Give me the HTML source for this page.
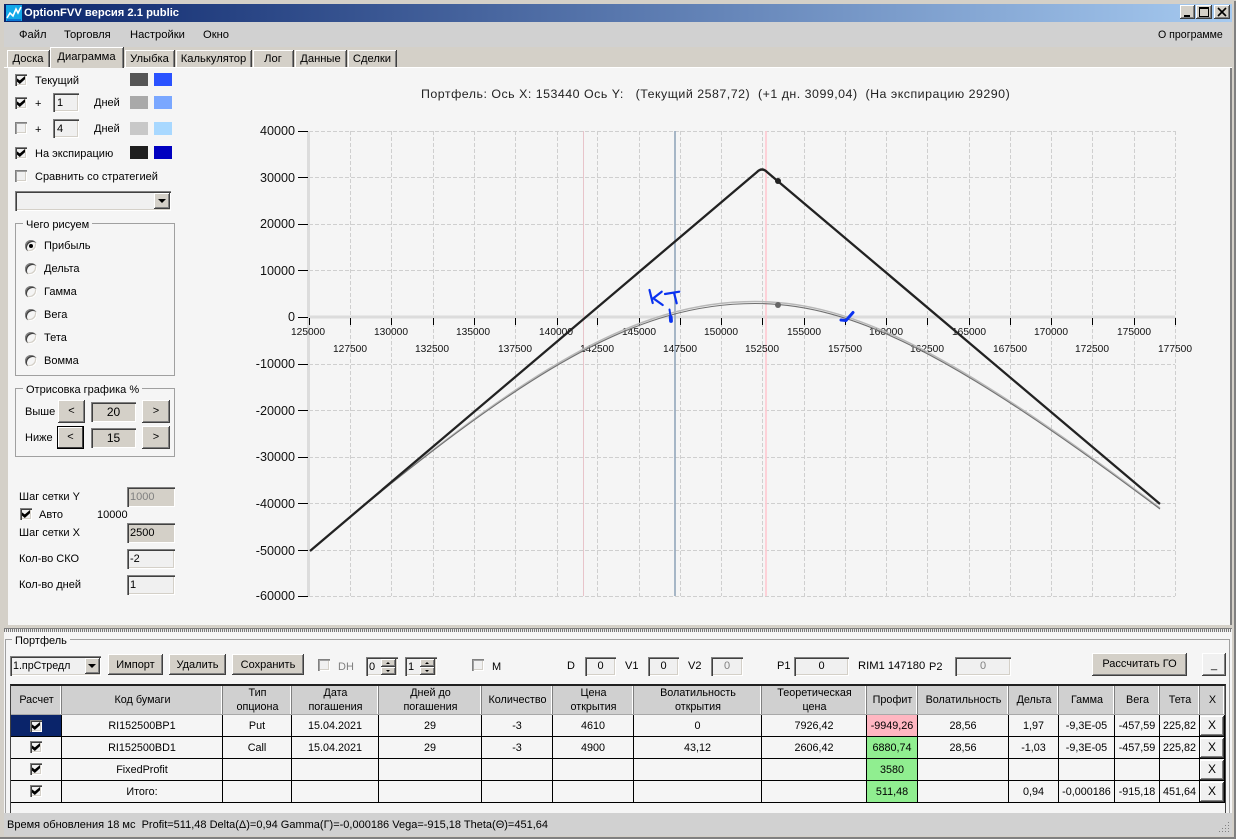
<!DOCTYPE html>
<html><head><meta charset="utf-8"><title>OptionFVV</title>
<style>
html,body{margin:0;padding:0;width:1236px;height:839px;overflow:hidden;background:#d4d0c8}
body{position:relative;font:11px "Liberation Sans","Noto Sans CJK SC",sans-serif;color:#000}
div,span{box-sizing:border-box}
.a{position:absolute}
.t{position:absolute;white-space:pre;line-height:14px;height:14px}
.b{position:absolute;background:#d4d0c8;box-shadow:inset -1px -1px #404040,inset 1px 1px #fff,inset -2px -2px #808080;text-align:center;white-space:pre}
.i{position:absolute;background:#f0f0f0;box-shadow:inset 1px 1px #808080,inset 2px 2px #404040,inset -1px -1px #fff,inset -2px -2px #d4d0c8;padding-left:4px;white-space:pre;font-size:11px}
.g{background:#d4d0c8}
.c{text-align:center;padding-left:0}
.cb{position:absolute;width:12px;height:12px;background:#f0f0f0;box-shadow:inset 1px 1px #808080,inset 2px 2px #404040,inset -1px -1px #fff,inset -2px -2px #d4d0c8}
.cb.on::after{content:"";position:absolute;left:2px;top:2px;width:8px;height:8px;background:#000;clip-path:polygon(0 30%,0 70%,35% 100%,100% 40%,100% 0,35% 55%)}
.cb.d{box-shadow:inset 1px 1px #808080,inset 2px 2px #a0a0a0,inset -1px -1px #fff,inset -2px -2px #d4d0c8}
.r{position:absolute;left:25px;width:12px;height:12px;border-radius:50%;background:#f5f5f5;box-shadow:inset 1px 1px 0 #808080,inset 2px 2px 0 #404040,inset -1px -1px 0 #fff,inset -2px -2px 0 #d4d0c8}
.r.on::after{content:"";position:absolute;left:4px;top:4px;width:4px;height:4px;border-radius:50%;background:#000}
.s{position:absolute;height:13px}
.gb{position:absolute;border:1px solid #a0a0a0}
.gl{position:absolute;background:#f5f5f5;padding:0 3px;white-space:pre;line-height:14px;font-size:11px}
.tab{position:absolute;top:50px;height:18px;background:#d4d0c8;box-shadow:inset 1px 1px #fff,inset -1px 0 #808080,1px 0 #404040;text-align:center;line-height:18px;font-size:11.2px}
.dn{position:absolute;width:0;height:0;border-left:4px solid transparent;border-right:4px solid transparent;border-top:4px solid #000}
.up2{position:absolute;width:0;height:0;border-left:2px solid transparent;border-right:2px solid transparent;border-bottom:2px solid #000}
.dn2{position:absolute;width:0;height:0;border-left:2px solid transparent;border-right:2px solid transparent;border-top:2px solid #000}
table{position:absolute;left:11px;top:686px;border-collapse:separate;border-spacing:0;table-layout:fixed;width:1214px;font-size:10.8px}
th{font-weight:normal;background:#d0d0d0;height:28px;padding:0;line-height:14px;box-shadow:inset -1px 0 #808080,inset -2px 0 #fff;border-bottom:1px solid #a8a8a8;text-align:center}
td{height:22px;padding:0;text-align:center;border-right:1px solid #000;border-bottom:1px solid #000;box-sizing:border-box;background:#f5f5f5}
.x{position:absolute;left:1200px;width:24px;height:20px;line-height:19px;font-size:12px;background:#f0f0f0}
</style></head>
<body>
<!-- title bar -->
<div class="a" style="left:4px;top:4px;width:1228px;height:18px;background:linear-gradient(90deg,#0a246a,#a6caf0)"></div>
<svg class="a" style="left:6px;top:5px" width="16" height="16"><rect width="16" height="16" fill="#12a8e8"/><path d="M1 13L4 8l3 3 3-7 2 4 3-6" stroke="#fff" stroke-width="1.6" fill="none"/><path d="M1 15h14" stroke="#0040c0"/></svg>
<div class="t" style="left:24px;top:6px;color:#fff;font-weight:bold;font-size:11.2px">OptionFVV версия 2.1 public</div>
<div class="b" style="left:1180px;top:5px;width:15px;height:14px"></div><div class="a" style="left:1184px;top:15px;width:6px;height:2px;background:#000"></div>
<div class="b" style="left:1196px;top:5px;width:16px;height:14px"></div><div class="a" style="left:1199px;top:7px;width:10px;height:10px;border:1px solid #000;border-top-width:2px"></div>
<div class="b" style="left:1214px;top:5px;width:16px;height:14px"></div>
<svg class="a" style="left:1214px;top:5px" width="16" height="14"><path d="M4 3l8 8M12 3l-8 8" stroke="#000" stroke-width="1.6"/></svg>
<!-- menu -->
<div class="a" style="left:4px;top:22px;width:1228px;height:25px;background:#d1d1d1"></div>
<div class="t" style="left:19px;top:28px;font-size:11.2px">Файл</div>
<div class="t" style="left:64px;top:28px;font-size:11.2px">Торговля</div>
<div class="t" style="left:130px;top:28px;font-size:11.2px">Настройки</div>
<div class="t" style="left:203px;top:28px;font-size:11.2px">Окно</div>
<div class="t" style="left:1158px;top:28px;font-size:10.6px">О программе</div>
<!-- tabs -->
<div class="tab" style="left:7px;width:42px">Доска</div>
<div class="tab" style="left:50px;width:73px;top:47px;height:21px;z-index:2;line-height:20px">Диаграмма</div>
<div class="tab" style="left:125px;width:49px">Улыбка</div>
<div class="tab" style="left:176px;width:75px">Калькулятор</div>
<div class="tab" style="left:253px;width:40px">Лог</div>
<div class="tab" style="left:295px;width:51px">Данные</div>
<div class="tab" style="left:348px;width:48px">Сделки</div>
<!-- chart panel -->
<div class="a" style="left:4px;top:67px;width:1228px;height:1px;background:#fff"></div>
<div class="a" style="left:8px;top:68px;width:1222px;height:557px;background:#f5f5f5"></div>
<div class="a" style="left:1230px;top:68px;width:2px;height:560px;background:#808080"></div>
<div class="a" style="left:4px;top:625px;width:1228px;height:4px;background:#d4d0c8;border-bottom:1px solid #808080"></div>
<div class="a" style="left:4px;top:629px;width:1228px;height:3px;background:repeating-linear-gradient(90deg,#777 0 1px,#eee 1px 2px)"></div>

<!-- left controls -->
<div class="cb on" style="left:15px;top:74px"></div><div class="t" style="left:35px;top:74px">Текущий</div>
<div class="s" style="left:130px;top:73px;width:18px;background:#555"></div><div class="s" style="left:154px;top:73px;width:18px;background:#2a52ff"></div>
<div class="cb on" style="left:15px;top:97px"></div><div class="t" style="left:35px;top:97px">+</div>
<div class="i" style="left:53px;top:93px;width:26px;height:19px;line-height:20px">1</div><div class="t" style="left:94px;top:96px">Дней</div>
<div class="s" style="left:130px;top:96px;width:18px;background:#a9a9a9"></div><div class="s" style="left:154px;top:96px;width:18px;background:#7aa7ff"></div>
<div class="cb d" style="left:15px;top:122px"></div><div class="t" style="left:35px;top:123px">+</div>
<div class="i" style="left:53px;top:119px;width:26px;height:19px;line-height:20px">4</div><div class="t" style="left:94px;top:122px">Дней</div>
<div class="s" style="left:130px;top:122px;width:18px;background:#c8c8c8"></div><div class="s" style="left:154px;top:122px;width:18px;background:#a8d8ff"></div>
<div class="cb on" style="left:15px;top:147px"></div><div class="t" style="left:35px;top:147px">На экспирацию</div>
<div class="s" style="left:130px;top:146px;width:18px;background:#1e1e1e"></div><div class="s" style="left:154px;top:146px;width:18px;background:#0000c0"></div>
<div class="cb d" style="left:15px;top:170px"></div><div class="t" style="left:35px;top:170px">Сравнить со стратегией</div>
<div class="i" style="left:15px;top:191px;width:156px;height:20px"></div>
<div class="b" style="left:154px;top:193px;width:16px;height:16px"></div><div class="dn" style="left:158px;top:199px"></div>

<div class="gb" style="left:15px;top:223px;width:160px;height:153px"></div>
<div class="gl" style="left:23px;top:218px">Чего рисуем</div>
<div class="r on" style="top:240px"></div><div class="t" style="left:44px;top:239px">Прибыль</div>
<div class="r" style="top:263px"></div><div class="t" style="left:44px;top:262px">Дельта</div>
<div class="r" style="top:286px"></div><div class="t" style="left:44px;top:285px">Гамма</div>
<div class="r" style="top:309px"></div><div class="t" style="left:44px;top:308px">Вега</div>
<div class="r" style="top:332px"></div><div class="t" style="left:44px;top:331px">Тета</div>
<div class="r" style="top:355px"></div><div class="t" style="left:44px;top:354px">Вомма</div>

<div class="gb" style="left:15px;top:388px;width:160px;height:69px"></div>
<div class="gl" style="left:23px;top:383px">Отрисовка графика %</div>
<div class="t" style="left:25px;top:405px">Выше</div>
<div class="b" style="left:58px;top:400px;width:27px;height:23px;line-height:22px">&lt;</div>
<div class="i g c" style="left:91px;top:402px;width:45px;height:20px;line-height:20px;font-size:12px">20</div>
<div class="b" style="left:142px;top:400px;width:28px;height:23px;line-height:22px">&gt;</div>
<div class="t" style="left:25px;top:431px">Ниже</div>
<div class="b" style="left:57px;top:426px;width:27px;height:23px;line-height:22px;box-shadow:inset 0 0 0 1px #000,inset -2px -2px #404040,inset 2px 2px #fff">&lt;</div>
<div class="i g c" style="left:91px;top:428px;width:45px;height:20px;line-height:20px;font-size:12px">15</div>
<div class="b" style="left:142px;top:426px;width:28px;height:23px;line-height:22px">&gt;</div>

<div class="t" style="left:19px;top:490px">Шаг сетки Y</div>
<div class="i g" style="left:127px;top:487px;width:48px;height:20px;line-height:21px;color:#808080;padding-left:3px">1000</div>
<div class="cb on" style="left:20px;top:508px"></div><div class="t" style="left:39px;top:508px">Авто</div>
<div class="t" style="left:97px;top:508px">10000</div>
<div class="t" style="left:19px;top:526px">Шаг сетки X</div>
<div class="i g" style="left:127px;top:523px;width:48px;height:20px;line-height:21px;padding-left:3px">2500</div>
<div class="t" style="left:19px;top:552px">Кол-во СКО</div>
<div class="i" style="left:127px;top:549px;width:48px;height:20px;line-height:21px;padding-left:3px">-2</div>
<div class="t" style="left:19px;top:578px">Кол-во дней</div>
<div class="i" style="left:127px;top:575px;width:48px;height:20px;line-height:21px;padding-left:3px">1</div>

<!-- chart -->
<div class="t" style="left:421px;top:87px;font-size:12.4px;letter-spacing:.5px;color:#222">Портфель: Ось X: 153440 Ось Y:   (Текущий 2587,72)  (+1 дн. 3099,04)  (На экспирацию 29290)</div>
<svg class="a" style="left:0;top:0" width="1236" height="630" font-family="Liberation Sans" fill="none">
<path d="M350.5 131V596M391.5 131V596M433.5 131V596M474.5 131V596M515.5 131V596M557.5 131V596M597.5 131V596M639.5 131V596M680.5 131V596M721.5 131V596M762.5 131V596M804.5 131V596M845.5 131V596M886.5 131V596M927.5 131V596M969.5 131V596M1010.5 131V596M1051.5 131V596M1092.5 131V596M1134.5 131V596M1175.5 131V596M309 131.5H1175M309 177.5H1175M309 224.5H1175M309 270.5H1175M309 364.5H1175M309 410.5H1175M309 457.5H1175M309 503.5H1175M309 550.5H1175M309 596.5H1175" stroke="#cfcfcf" stroke-dasharray="4 2"/>
<path d="M308.5 131V597" stroke="#dcdcdc" stroke-width="3"/>
<path d="M309 317H1175" stroke="#dcdcdc" stroke-width="3"/>
<path d="M583.5 131V596" stroke="#e8c4ca"/>
<path d="M675 131V596" stroke="#93a6ba" stroke-width="1.6"/>
<path d="M766 131V596" stroke="#ffc8d0" stroke-width="1.6"/>
<path d="M298 131.5H308M298 177.5H308M298 224.5H308M298 270.5H308M298 317.5H308M298 364.5H308M298 410.5H308M298 457.5H308M298 503.5H308M298 550.5H308M298 596.5H308" stroke="#000"/>
<path d="M309.5 318V325M350.5 318V325M391.5 318V325M433.5 318V325M474.5 318V325M515.5 318V325M557.5 318V325M597.5 318V325M639.5 318V325M680.5 318V325M721.5 318V325M762.5 318V325M804.5 318V325M845.5 318V325M886.5 318V325M927.5 318V325M969.5 318V325M1010.5 318V325M1051.5 318V325M1092.5 318V325M1134.5 318V325M1175.5 318V325" stroke="#000"/>
<g fill="#111" font-size="12.6" text-anchor="end">
<text x="295" y="135">40000</text><text x="295" y="182">30000</text><text x="295" y="228">20000</text><text x="295" y="275">10000</text><text x="295" y="321">0</text><text x="295" y="368">-10000</text><text x="295" y="415">-20000</text><text x="295" y="461">-30000</text><text x="295" y="508">-40000</text><text x="295" y="555">-50000</text><text x="295" y="600">-60000</text>
</g>
<g fill="#111" font-size="10.2" text-anchor="middle">
<text x="308" y="335">125000</text><text x="391" y="335">130000</text><text x="473" y="335">135000</text><text x="556" y="335">140000</text><text x="639" y="335">145000</text><text x="721" y="335">150000</text><text x="804" y="335">155000</text><text x="886" y="335">160000</text><text x="969" y="335">165000</text><text x="1051" y="335">170000</text><text x="1134" y="335">175000</text>
<text x="350" y="352">127500</text><text x="432" y="352">132500</text><text x="515" y="352">137500</text><text x="597" y="352">142500</text><text x="680" y="352">147500</text><text x="762" y="352">152500</text><text x="845" y="352">157500</text><text x="927" y="352">162500</text><text x="1010" y="352">167500</text><text x="1092" y="352">172500</text><text x="1175" y="352">177500</text>
</g>
<path d="M310 551C528 363.5 639.5 301.5 755 301.5C853 301.5 954.5 353.5 1160 508" stroke="#b8b8b8" stroke-width="1.5"/>
<path d="M310 551C528 365 639.5 303.5 755 303.5C853 303.5 954.5 355 1160 509" stroke="#707070" stroke-width="1.1"/>
<path d="M310 551L757 172Q762 167 767 172L1160 504" stroke="#222" stroke-width="2.3"/>
<circle cx="778" cy="181" r="3" fill="#222"/>
<circle cx="778" cy="305" r="3" fill="#666"/>
<g stroke="#0a32f0" stroke-linecap="round" stroke-linejoin="round">
<path d="M649.5 290L652.7 303M661.7 291.7L653.3 298.3L662.7 305M665 294L679.3 291.7M674 292.7L676.7 303.3" stroke-width="2.2"/>
<path d="M669.5 309.5L670.5 316" stroke-width="2"/><path d="M670.7 317L671 321" stroke-width="3.8"/>
<path d="M841 320L846 320.5L853 312.5" stroke-width="3"/>
</g>
</svg>

<!-- portfolio -->
<div class="a" style="left:4px;top:632px;width:1228px;height:181px;background:#f5f5f5"></div>
<div class="gb" style="left:5px;top:639px;width:1225px;height:180px;border-bottom:0"></div>
<div class="gl" style="left:12px;top:634px">Портфель</div>
<div class="i" style="left:10px;top:656px;width:91px;height:20px;line-height:20px;padding-left:3px;font-size:10.7px">1.прСтредл</div>
<div class="b" style="left:85px;top:658px;width:15px;height:16px"></div><div class="dn" style="left:88px;top:664px"></div>
<div class="b" style="left:108px;top:654px;width:55px;height:21px;line-height:22px">Импорт</div>
<div class="b" style="left:169px;top:654px;width:57px;height:21px;line-height:22px">Удалить</div>
<div class="b" style="left:232px;top:654px;width:72px;height:21px;line-height:22px">Сохранить</div>
<div class="cb d" style="left:318px;top:659px"></div><div class="t" style="left:338px;top:660px;color:#808080">DH</div>
<div class="i" style="left:366px;top:657px;width:32px;height:19px;line-height:20px;padding-left:3px">0</div>
<div class="b" style="left:381px;top:659px;width:15px;height:8px"></div><div class="up2" style="left:386px;top:662px"></div><div class="b" style="left:381px;top:667px;width:15px;height:8px"></div><div class="dn2" style="left:386px;top:670px"></div>
<div class="i" style="left:405px;top:657px;width:32px;height:19px;line-height:20px;padding-left:3px">1</div>
<div class="b" style="left:420px;top:659px;width:15px;height:8px"></div><div class="up2" style="left:425px;top:662px"></div><div class="b" style="left:420px;top:667px;width:15px;height:8px"></div><div class="dn2" style="left:425px;top:670px"></div>
<div class="cb d" style="left:472px;top:659px"></div><div class="t" style="left:492px;top:660px">M</div>
<div class="t" style="left:567px;top:659px">D</div><div class="i c" style="left:585px;top:657px;width:31px;height:19px;line-height:19px">0</div>
<div class="t" style="left:625px;top:659px">V1</div><div class="i c" style="left:648px;top:657px;width:31px;height:19px;line-height:19px">0</div>
<div class="t" style="left:688px;top:659px">V2</div><div class="i c" style="left:711px;top:657px;width:32px;height:19px;line-height:19px;color:#808080">0</div>
<div class="t" style="left:777px;top:659px">P1</div><div class="i c" style="left:794px;top:657px;width:55px;height:19px;line-height:19px">0</div>
<div class="t" style="left:858px;top:659px;font-size:11.2px">RIM1 147180</div>
<div class="t" style="left:929px;top:660px">P2</div><div class="i c" style="left:955px;top:657px;width:56px;height:19px;line-height:19px;color:#808080">0</div>
<div class="b" style="left:1092px;top:653px;width:95px;height:23px;line-height:22px">Рассчитать ГО</div>
<div class="b" style="left:1202px;top:653px;width:24px;height:23px;line-height:25px;background:#f0f0f0">_</div>

<!-- table -->
<div class="a" style="left:10px;top:684px;width:1216px;height:129px;border:1px solid #404040;border-top:2px solid #202020;border-bottom:0"></div>
<table>
<colgroup><col style="width:51px"><col style="width:161px"><col style="width:69px"><col style="width:87px"><col style="width:103px"><col style="width:71px"><col style="width:81px"><col style="width:128px"><col style="width:105px"><col style="width:51px"><col style="width:91px"><col style="width:50px"><col style="width:56px"><col style="width:45px"><col style="width:40px"><col style="width:25px"></colgroup>
<tr><th>Расчет</th><th>Код бумаги</th><th>Тип<br>опциона</th><th>Дата<br>погашения</th><th>Дней до<br>погашения</th><th>Количество</th><th>Цена<br>открытия</th><th>Волатильность<br>открытия</th><th>Теоретическая<br>цена</th><th>Профит</th><th>Волатильность</th><th>Дельта</th><th>Гамма</th><th>Вега</th><th>Тета</th><th>X</th></tr>
<tr><td style="background:#0a246a"></td><td>RI152500BP1</td><td>Put</td><td>15.04.2021</td><td>29</td><td>-3</td><td>4610</td><td>0</td><td>7926,42</td><td style="background:#ffb6c1">-9949,26</td><td>28,56</td><td>1,97</td><td>-9,3E-05</td><td>-457,59</td><td>225,82</td><td></td></tr>
<tr><td></td><td>RI152500BD1</td><td>Call</td><td>15.04.2021</td><td>29</td><td>-3</td><td>4900</td><td>43,12</td><td>2606,42</td><td style="background:#90ee90">6880,74</td><td>28,56</td><td>-1,03</td><td>-9,3E-05</td><td>-457,59</td><td>225,82</td><td></td></tr>
<tr><td></td><td>FixedProfit</td><td></td><td></td><td></td><td></td><td></td><td></td><td></td><td style="background:#90ee90">3580</td><td></td><td></td><td></td><td></td><td></td><td></td></tr>
<tr><td></td><td>Итого:</td><td></td><td></td><td></td><td></td><td></td><td></td><td></td><td style="background:#90ee90">511,48</td><td></td><td>0,94</td><td>-0,000186</td><td>-915,18</td><td>451,64</td><td></td></tr>
</table>
<div class="cb on" style="left:30px;top:720px"></div>
<div class="cb on" style="left:30px;top:741px"></div>
<div class="cb on" style="left:30px;top:763px"></div>
<div class="cb on" style="left:30px;top:785px"></div>
<div class="b x" style="top:716px">X</div>
<div class="b x" style="top:738px">X</div>
<div class="b x" style="top:760px">X</div>
<div class="b x" style="top:782px">X</div>

<!-- status -->
<div class="a" style="left:4px;top:813px;width:1228px;height:23px;background:#d1d1d1"></div>
<div class="t" style="left:7px;top:818px;font-size:11px">Время обновления 18 мс  Profit=511,48 Delta(Δ)=0,94 Gamma(Г)=-0,000186 Vega=-915,18 Theta(Θ)=451,64</div>
<svg class="a" style="left:1218px;top:820px" width="12" height="14"><path d="M10 2h1v1h-1zM7 5h1v1H7zM10 5h1v1h-1zM4 8h1v1H4zM7 8h1v1H7zM10 8h1v1h-1zM1 11h1v1H1zM4 11h1v1H4zM7 11h1v1H7zM10 11h1v1h-1z" fill="#808080"/></svg>
<div class="a" style="left:0;top:836px;width:1236px;height:1px;background:#d4d0c8"></div>
<div class="a" style="left:0;top:837px;width:1236px;height:2px;background:#808080"></div>
<div class="a" style="left:1234px;top:0;width:2px;height:839px;background:#808080"></div>
<div class="a" style="left:0;top:0;width:1236px;height:1px;background:#d4d0c8"></div>
</body></html>
